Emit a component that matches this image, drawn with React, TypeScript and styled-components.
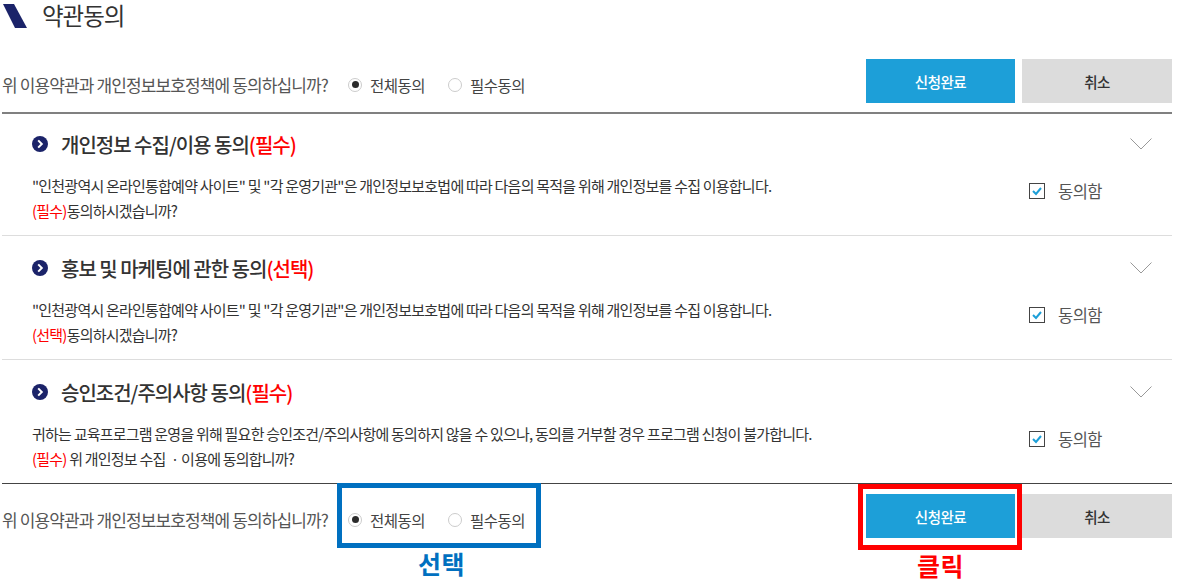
import React from 'react';
import styled, { createGlobalStyle } from 'styled-components';

const GlobalStyle = createGlobalStyle`
  html, body {
    background: #fff;
    margin: 0;
    padding: 0;
  }
  body {
    font-family: "Noto Sans CJK KR", "Noto Sans", sans-serif;
    overflow: hidden;
  }
`;

const Page = styled.div`
  box-sizing: border-box;
  height: 586px;
  padding: 0 5px 0 2px;
  width: 1177px;
`;
const TitleBar = styled.div`
  align-items: center;
  display: flex;
  gap: 14px;
  height: 30px;
`;
const TitleMark = styled.svg`
  flex: none;
  height: 26px;
  width: 26px;
`;
const Title = styled.h2`
  color: #333;
  font-size: 23.5px;
  font-weight: 400;
  letter-spacing: -1px;
  line-height: 30px;
  margin: 0;
`;
const ConsentRow = styled.div`
  align-items: center;
  display: flex;
  height: 44px;
  justify-content: space-between;
`;
const TopConsent = styled(ConsentRow)`
  border-bottom: 2px solid #808080;
  margin-top: 29px;
  padding-bottom: 9px;
`;
const BottomConsent = styled(ConsentRow)`
  margin-top: 10px;
`;
const Question = styled.div`
  align-items: center;
  display: flex;
  margin-top: 7px;
`;
const QuestionText = styled.span`
  color: #555;
  font-size: 17px;
  letter-spacing: -0.88px;
  width: 346px;
`;
const RadioGroup = styled.div`
  align-items: center;
  display: flex;
  gap: 23px;
  position: relative;
`;
const RadioItem = styled.label`
  align-items: center;
  color: #444;
  display: flex;
  font-size: 15.5px;
  gap: 8px;
  letter-spacing: -0.5px;
`;
const RadioDot = styled.span<{ $on?: boolean }>`
  align-items: center;
  background: #fff;
  border: 1px solid #ccc;
  border-radius: 50%;
  box-sizing: border-box;
  display: inline-flex;
  height: 14px;
  justify-content: center;
  width: 14px;
  &::after {
    background: ${({ $on }) => ($on ? '#2b2b2b' : 'transparent')};
    border-radius: 50%;
    content: '';
    height: 7px;
    width: 7px;
  }
`;
const Buttons = styled.div`
  display: flex;
  gap: 7px;
`;
const Button = styled.button<{ $primary?: boolean }>`
  background: ${({ $primary }) => ($primary ? '#1d9fd8' : '#dcdcdc')};
  border: 0;
  color: ${({ $primary }) => ($primary ? '#fff' : '#333')};
  font-family: inherit;
  font-size: 14.5px;
  font-weight: 500;
  height: 44px;
  letter-spacing: -0.5px;
  padding: 0;
  position: relative;
  width: ${({ $primary }) => ($primary ? '149px' : '150px')};
`;
const Section = styled.section<{ $last?: boolean }>`
  border-bottom: ${({ $last }) => ($last ? '1px solid #444' : '1px solid #ddd')};
  box-sizing: border-box;
  display: flex;
  flex-direction: column;
  height: 124px;
  padding: 17px 20px 0 30px;
  &:first-of-type {
    height: 122px;
    padding-top: 15px;
  }
`;
const SectionHead = styled.div`
  align-items: center;
  display: flex;
  height: 30px;
`;
const Bullet = styled.svg`
  flex: none;
  height: 16px;
  margin-right: 13px;
  width: 16px;
`;
const SectionTitle = styled.h3`
  color: #333;
  flex: 1;
  font-size: 20px;
  font-weight: 500;
  letter-spacing: -1px;
  margin: 0;
`;
const Chevron = styled.svg`
  flex: none;
  height: 12px;
  width: 22px;
`;
const SectionBody = styled.div`
  align-items: center;
  display: flex;
  justify-content: space-between;
  margin-top: 14px;
`;
const Terms = styled.p`
  color: #333;
  font-size: 15px;
  letter-spacing: -0.78px;
  line-height: 25px;
  margin: 0;
`;
const Required = styled.span`
  color: #f00;
`;
const AgreeBox = styled.label`
  align-items: center;
  color: #555;
  display: flex;
  font-size: 16.5px;
  gap: 13px;
  letter-spacing: -0.5px;
  margin: 0 50px 14px 0;
`;
const CheckBox = styled.svg`
  flex: none;
  height: 16px;
  width: 16px;
`;
const Frame = styled.div<{ $color: string }>`
  border: 5px solid ${({ $color }) => $color};
  box-sizing: border-box;
  pointer-events: none;
  position: absolute;
`;
const RadioFrame = styled(Frame)`
  height: 65px;
  left: -11px;
  top: -26px;
  width: 204px;
`;
const ButtonFrame = styled(Frame)`
  height: 66px;
  left: -8px;
  top: -10px;
  width: 164px;
`;
const Callout = styled.span<{ $color: string; $top: number; $shift?: number }>`
  color: ${({ $color }) => $color};
  font-size: 25px;
  font-weight: 700;
  left: ${({ $shift }) => $shift ?? 0}px;
  letter-spacing: 0.5px;
  line-height: 30px;
  position: absolute;
  text-align: center;
  top: ${({ $top }) => $top}px;
  width: 100%;
`;

const sections = [
  {
    title: '개인정보 수집/이용 동의',
    tag: '(필수)',
    line: '"인천광역시 온라인통합예약 사이트" 및 "각 운영기관"은 개인정보보호법에 따라 다음의 목적을 위해 개인정보를 수집 이용합니다.',
    ask: '동의하시겠습니까?',
  },
  {
    title: '홍보 및 마케팅에 관한 동의',
    tag: '(선택)',
    line: '"인천광역시 온라인통합예약 사이트" 및 "각 운영기관"은 개인정보보호법에 따라 다음의 목적을 위해 개인정보를 수집 이용합니다.',
    ask: '동의하시겠습니까?',
  },
  {
    title: '승인조건/주의사항 동의',
    tag: '(필수)',
    line: '귀하는 교육프로그램 운영을 위해 필요한 승인조건/주의사항에 동의하지 않을 수 있으나, 동의를 거부할 경우 프로그램 신청이 불가합니다.',
    ask: ' 위 개인정보 수집 ㆍ이용에 동의합니까?',
  },
];

const Radios = () => (
  <>
    <RadioItem><RadioDot $on />전체동의</RadioItem>
    <RadioItem><RadioDot />필수동의</RadioItem>
  </>
);

const App = () => (
  <Page>
    <GlobalStyle />
    <TitleBar>
      <TitleMark viewBox="0 0 26 26">
        <polygon points="1,2 12,2 25,26 13,26" fill="#1b2369" />
      </TitleMark>
      <Title>약관동의</Title>
    </TitleBar>
    <TopConsent>
      <Question>
        <QuestionText>위 이용약관과 개인정보보호정책에 동의하십니까?</QuestionText>
        <RadioGroup><Radios /></RadioGroup>
      </Question>
      <Buttons>
        <Button $primary>신청완료</Button>
        <Button>취소</Button>
      </Buttons>
    </TopConsent>
    {sections.map((s, i) => (
      <Section key={s.title} $last={i === sections.length - 1}>
        <SectionHead>
          <Bullet viewBox="0 0 16 16">
            <circle cx="8" cy="8" r="8" fill="#1b2369" />
            <path d="M6.2 4.4 9.8 8l-3.6 3.6" fill="none" stroke="#fff" strokeWidth="2" />
          </Bullet>
          <SectionTitle>{s.title}<Required>{s.tag}</Required></SectionTitle>
          <Chevron viewBox="0 0 22 12">
            <path d="M.5.5 11 11 21.5.5" fill="none" stroke="#999" />
          </Chevron>
        </SectionHead>
        <SectionBody>
          <Terms>
            {s.line}<br />
            <Required>{s.tag}</Required>{s.ask}
          </Terms>
          <AgreeBox>
            <CheckBox viewBox="0 0 16 16">
              <rect x=".5" y=".5" width="15" height="15" fill="#fff" stroke="#444" />
              <path d="M4 8l3 3 5-6" fill="none" stroke="#1d9fd8" strokeWidth="2" />
            </CheckBox>
            동의함
          </AgreeBox>
        </SectionBody>
      </Section>
    ))}
    <BottomConsent>
      <Question>
        <QuestionText>위 이용약관과 개인정보보호정책에 동의하십니까?</QuestionText>
        <RadioGroup>
          <Radios />
          <RadioFrame $color="#0070c0" />
          <Callout $color="#0070c0" $top={39} $shift={5}>선택</Callout>
        </RadioGroup>
      </Question>
      <Buttons>
        <Button $primary>
          신청완료
          <ButtonFrame $color="#f00" />
          <Callout $color="#f00" $top={56}>클릭</Callout>
        </Button>
        <Button>취소</Button>
      </Buttons>
    </BottomConsent>
  </Page>
);

export default App;
